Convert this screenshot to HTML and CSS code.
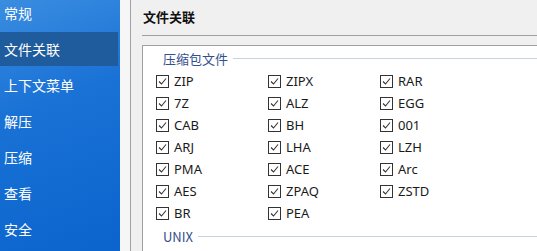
FILE: index.html
```html
<!DOCTYPE html>
<html lang="zh-CN">
<head>
    <meta charset="UTF-8">
    <title>文件关联</title>
    <link rel="stylesheet" href="styles.css">
</head>
<body>
    <nav class="sidebar">
        <div class="nav-item">常规</div>
        <div class="nav-item active">文件关联</div>
        <div class="nav-item">上下文菜单</div>
        <div class="nav-item">解压</div>
        <div class="nav-item">压缩</div>
        <div class="nav-item">查看</div>
        <div class="nav-item">安全</div>
    </nav>
    <div class="gutter"></div>

    <main class="main">
        <div class="title">文件关联</div>
        <div class="box">
            <div class="group">
                <span class="legend">压缩包文件</span>
                <span class="rule"></span>
            </div>
            <div class="checks" id="checks"></div>
            <div class="group unix">
                <span class="legend">UNIX</span>
                <span class="rule"></span>
            </div>
        </div>
    </main>

    <script>
        const formats = ['ZIP', 'ZIPX', 'RAR', '7Z', 'ALZ', 'EGG', 'CAB', 'BH', '001',
            'ARJ', 'LHA', 'LZH', 'PMA', 'ACE', 'Arc', 'AES', 'ZPAQ', 'ZSTD', 'BR', 'PEA'];

        const tick = '<svg width="13" height="13" viewBox="0 0 13 13">' +
            '<rect x="0.5" y="0.5" width="12" height="12" fill="#fff" stroke="#333"/>' +
            '<path d="M3 6.5 L5.5 9 L10 3.5" fill="none" stroke="#333" stroke-width="1.1"/></svg>';

        const checks = document.getElementById('checks');
        for (let name of formats) {
            const item = document.createElement('label');
            item.className = 'check';
            item.innerHTML = tick + '<span>' + name + '</span>';
            checks.appendChild(item);
        }
    </script>
</body>
</html>
```

FILE: styles.css
```css
body {
    margin: 0;
    width: 537px;
    height: 251px;
    overflow: hidden;
    display: flex;
    font-family: 'Noto Sans', 'Noto Sans CJK SC', sans-serif;
    font-size: 13px;
    color: #1a1a1a;
}

.sidebar {
    width: 120px;
    flex-shrink: 0;
    background: linear-gradient(160deg, #3a8de0 0%, #1a72d6 40%, #0a64cc 100%);
}

.nav-item {
    height: 36px;
    line-height: 36px;
    padding-left: 4px;
    color: #fff;
    font-family: 'Noto Sans CJK SC', sans-serif;
    font-size: 14px;
}

.nav-item:first-child {
    height: 31px;
    line-height: 26px;
}

.nav-item.active {
    height: 34px;
    line-height: 34px;
    margin: 1px 2px 1px 0;
    background: #1e5c9e;
}

.gutter {
    width: 10px;
    flex-shrink: 0;
    background: #f6f6f6;
    border-right: 1px solid #a0a0a0;
}

.main {
    flex: 1;
    background: #f0f0f0;
    padding-left: 11px;
    display: flex;
    flex-direction: column;
}

.title {
    height: 35px;
    line-height: 34px;
    padding-left: 1px;
    font-family: 'Noto Sans CJK SC', sans-serif;
    font-weight: bold;
    font-size: 13px;
    color: #111;
    border-bottom: 1px solid #a0a0a0;
    margin-bottom: 9px;
}

.box {
    flex: 1;
    background: #fff;
    border-top: 1px solid #a0a0a0;
    border-left: 1px solid #a0a0a0;
    padding-left: 13px;
}

.group {
    display: flex;
    align-items: center;
    height: 24px;
    padding-left: 7px;
}

.legend {
    color: #34508c;
    font-family: 'Noto Sans CJK SC', sans-serif;
    padding-right: 5px;
}

.rule {
    flex: 1;
    border-top: 1px solid #c8d3de;
}

.checks {
    display: grid;
    grid-template-columns: repeat(3, 112px);
    grid-auto-rows: 22px;
}

.check {
    display: flex;
    align-items: center;
    gap: 5px;
}

.check svg {
    flex-shrink: 0;
}

.unix {
    margin-top: 0;
}
```
